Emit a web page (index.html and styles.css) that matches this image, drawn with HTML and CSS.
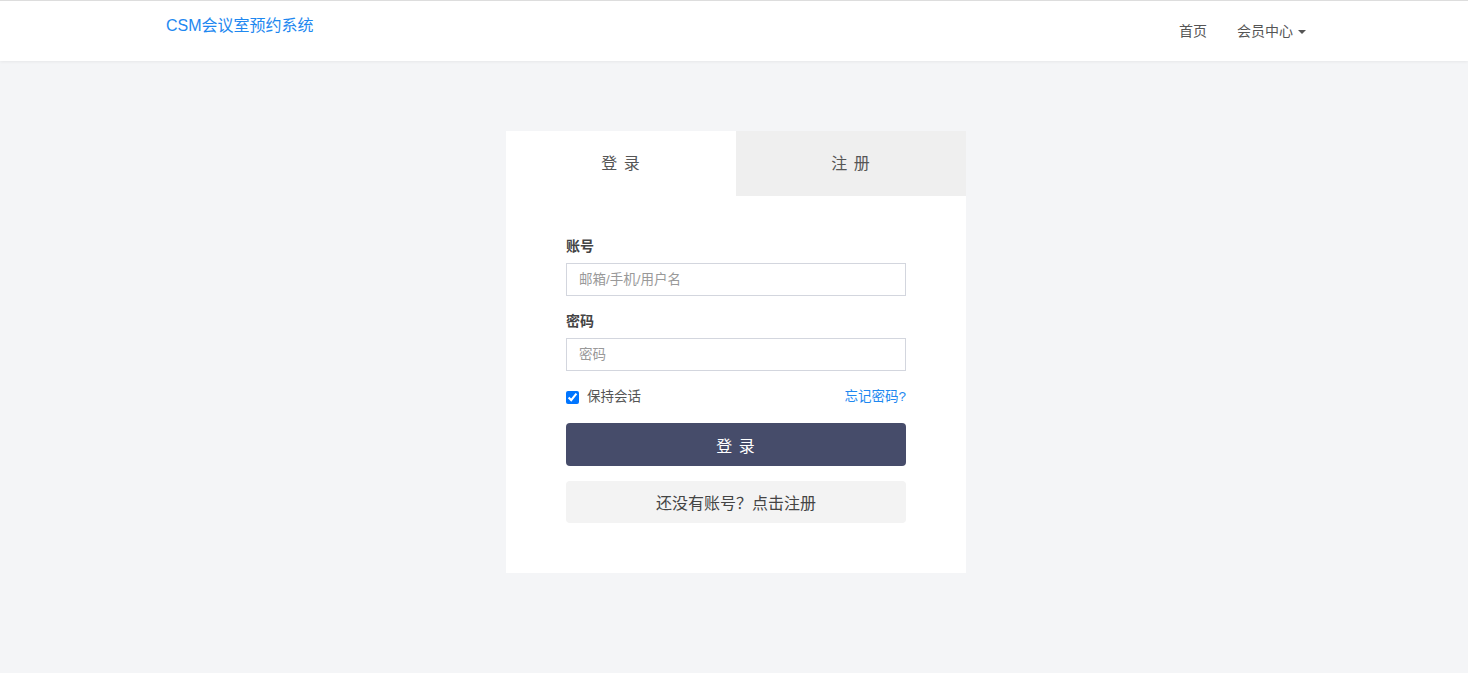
FILE: index.html
```html
<!DOCTYPE html>
<html>
	<head>
		<meta charset="utf-8">
		<title>CSM会议室预约系统</title>
		<link rel="stylesheet" href="styles.css">
	</head>
	<body>
		<div class="navbar">
			<div class="container">
				<a class="brand" href="javascript:;">CSM会议室预约系统</a>
				<ul class="nav">
					<li><a href="javascript:;">首页</a></li>
					<li><a href="javascript:;">会员中心<span class="caret"></span></a></li>
				</ul>
			</div>
		</div>
		<div class="box">
			<div class="tabs">
				<a class="tab active" href="javascript:;">登 录</a>
				<a class="tab" href="javascript:;">注 册</a>
			</div>
			<form class="form">
				<label class="label">账号</label>
				<input class="input" type="text" placeholder="邮箱/手机/用户名">
				<label class="label">密码</label>
				<input class="input" type="password" placeholder="密码">
				<div class="row">
					<label class="remember"><input type="checkbox" checked>保持会话</label>
					<a class="forget" href="javascript:;">忘记密码?</a>
				</div>
				<button class="btn btn-login" type="button">登 录</button>
				<button class="btn btn-reg" type="button">还没有账号？点击注册</button>
			</form>
		</div>
	</body>
</html>
```
FILE: styles.css
```css
*{
	margin: 0;
	padding: 0;
	box-sizing: border-box;
}
body{
	background-color: #f4f5f7;
	font-family: "Liberation Sans", "Noto Sans CJK SC", sans-serif;
	font-size: 13px;
	color: #555;
}
a{
	text-decoration: none;
}
.navbar{
	background-color: #fff;
	border-top: 1px solid #ddd;
	height: 61px;
	box-shadow: 0 1px 3px rgba(0,0,0,0.06);
}
.container{
	width: 1170px;
	margin: 0 auto;
	padding: 0 15px;
	display: flex;
	justify-content: space-between;
}
.brand{
	padding: 15px 0 0 2px;
	font-size: 16px;
	line-height: 20px;
	color: #1e88f0;
}
.nav{
	list-style: none;
	display: flex;
	margin-right: -2px;
}
.nav a{
	display: block;
	padding: 20px 0 0;
	margin-left: 30px;
	font-size: 14px;
	line-height: 20px;
	color: #555;
}
.caret{
	display: inline-block;
	width: 0;
	height: 0;
	margin-left: 5px;
	vertical-align: middle;
	border-top: 4px solid #555;
	border-left: 4px solid transparent;
	border-right: 4px solid transparent;
}
.box{
	width: 460px;
	margin: 70px 0 0 calc(50% - 228px);
	background-color: #fff;
}
.tabs{
	display: flex;
}
.tab{
	flex: 1;
	height: 65px;
	line-height: 65px;
	text-align: center;
	font-size: 16px;
	letter-spacing: 1px;
	color: #555;
	background-color: #efefef;
}
.tab.active{
	background-color: #fff;
}
.form{
	padding: 40px 60px 50px;
	display: flex;
	flex-direction: column;
}
.label{
	font-size: 14px;
	font-weight: bold;
	line-height: 20px;
	color: #444;
	margin-bottom: 7px;
}
.input{
	height: 33px;
	border: 1px solid #d3d6de;
	padding: 0 12px;
	font-size: 13.5px;
	font-family: inherit;
	color: #555;
	margin-bottom: 15px;
	outline: none;
}
.input::placeholder{
	color: #999;
}
.row{
	display: flex;
	justify-content: space-between;
	align-items: center;
	line-height: 20px;
	margin-top: 1px;
}
.remember{
	display: flex;
	align-items: center;
	gap: 8px;
	font-size: 13.5px;
	color: #555;
}
.remember input{
	width: 13px;
	height: 13px;
	margin: 0;
}
.forget{
	font-size: 13.5px;
	color: #1e88f0;
}
.btn{
	border: none;
	border-radius: 4px;
	font-family: inherit;
	font-size: 16px;
}
.btn-login{
	margin-top: 16px;
	height: 43px;
	background-color: #464c6a;
	color: #fff;
	letter-spacing: 1px;
}
.btn-reg{
	margin-top: 15px;
	height: 42px;
	background-color: #f3f3f3;
	color: #444;
}
```
